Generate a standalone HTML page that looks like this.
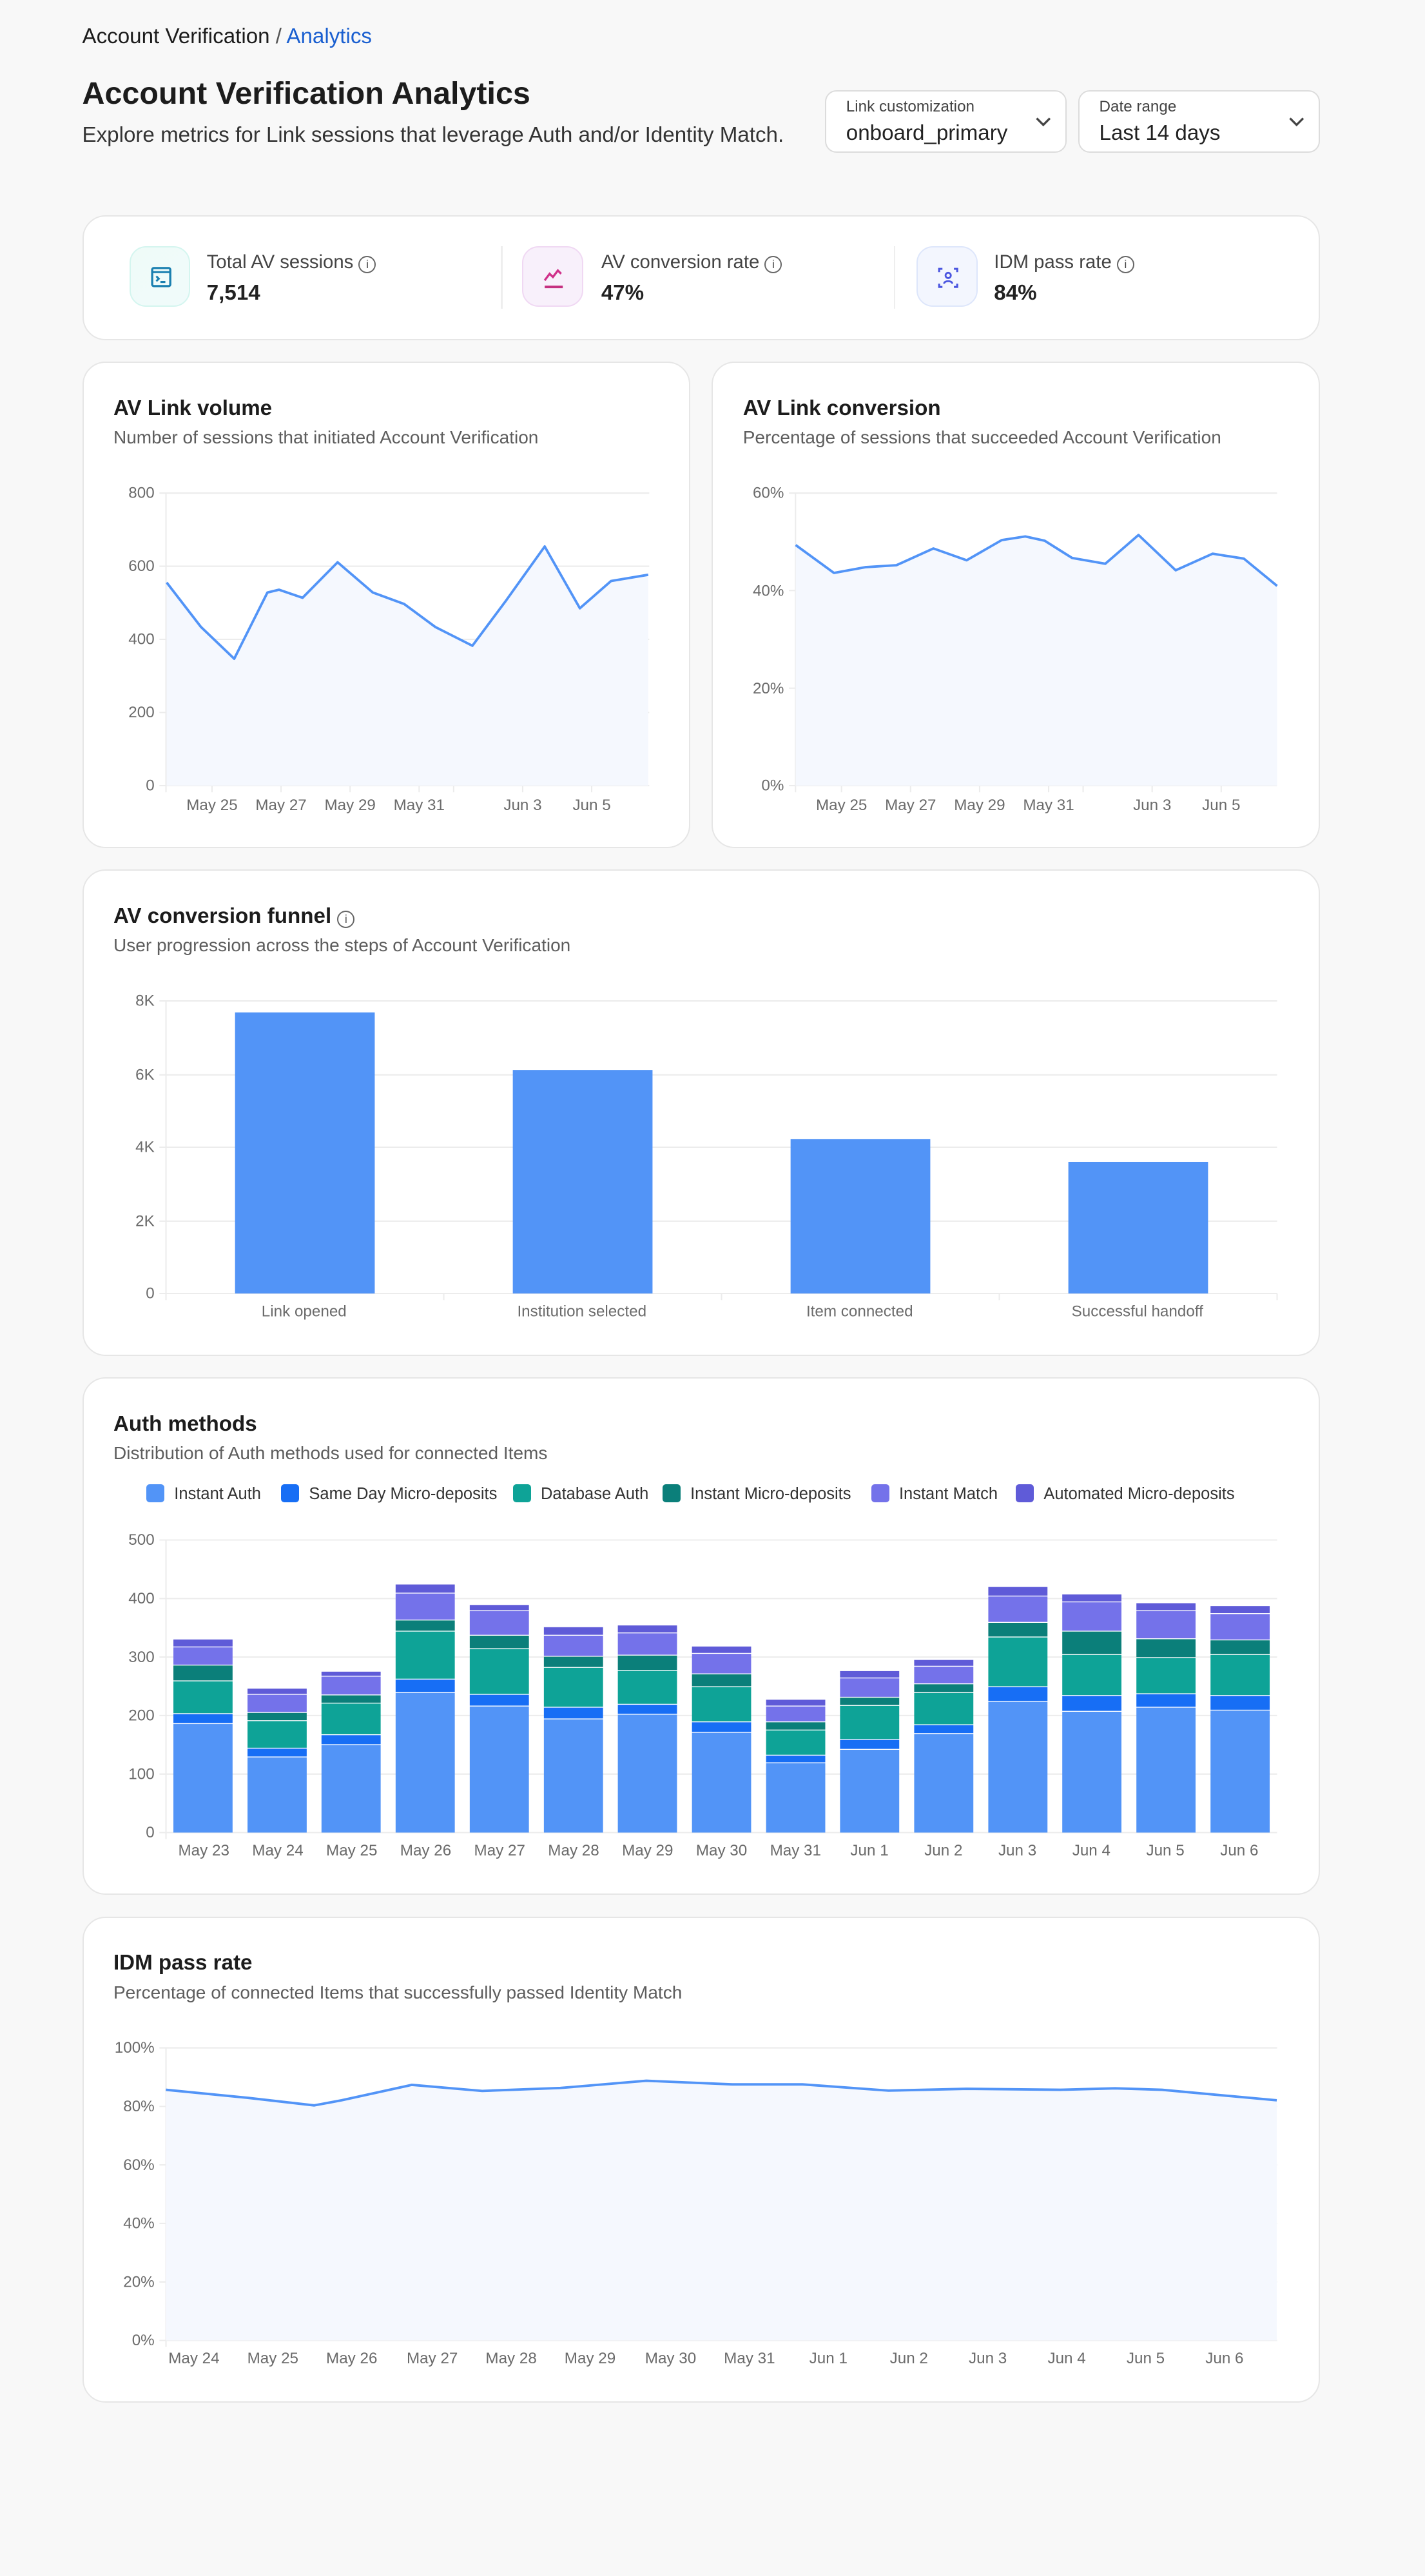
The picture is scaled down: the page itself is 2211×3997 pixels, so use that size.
<!DOCTYPE html>
<html><head><meta charset="utf-8">
<style>
html,body{margin:0;padding:0;background:#f8f8f8;}
body{width:2211px;height:3997px;overflow:hidden;}
#p{zoom:2.5502;width:867px;height:1567px;position:relative;font-family:"Liberation Sans",Arial,sans-serif;color:#1c1c1c;}
.a{position:absolute;}
.card{position:absolute;background:#fff;border:1px solid #e6e6e6;border-radius:14px;box-sizing:border-box;}
.t{font-size:13px;font-weight:bold;color:#1c1c1c;}
.s{font-size:11px;color:#5d5d5d;}
.dd{position:absolute;top:55px;height:38px;width:147px;border:1px solid #dcdcdc;border-radius:7px;background:#fff;box-sizing:border-box;}
.dd .l{position:absolute;left:12px;top:4px;font-size:9.5px;color:#444;}
.dd .v{position:absolute;left:12px;top:18px;font-size:13px;color:#222;}
.ic{position:absolute;width:37px;height:37px;border-radius:10px;box-sizing:border-box;}
.kl{position:absolute;font-size:11.5px;color:#444;}
.kv{position:absolute;font-size:13px;font-weight:bold;color:#222;}
svg text{font-family:"Liberation Sans",Arial,sans-serif;}
.ax{font-size:9.5px;fill:#6b6b6b;}
.c1{fill:#5294f7}.c2{fill:#176ef5}.c3{fill:#0ea397}.c4{fill:#0b7f7a}.c5{fill:#7472ea}.c6{fill:#5f5bd8}
.lg{position:absolute;top:903px;font-size:10px;color:#333;}
.lg i{display:inline-block;width:11px;height:11px;border-radius:2px;vertical-align:-2px;margin-right:6px;}
</style></head><body><div id="p">
<div class="a" style="left:50px;top:15px;font-size:13px;">Account Verification <span style="color:#555">/</span> <span style="color:#1a5fd0">Analytics</span></div>
<div class="a" style="left:50px;top:46px;font-size:19px;font-weight:bold;">Account Verification Analytics</div>
<div class="a" style="left:50px;top:75px;font-size:13px;color:#333;">Explore metrics for Link sessions that leverage Auth and/or Identity Match.</div>
<div class="dd" style="left:502px"><div class="l">Link customization</div><div class="v">onboard_primary</div><svg class="a" style="left:127px;top:15px" width="10" height="7"><path d="M1 1l4 4 4-4" stroke="#444" stroke-width="1.3" fill="none"/></svg></div>
<div class="dd" style="left:656px"><div class="l">Date range</div><div class="v">Last 14 days</div><svg class="a" style="left:127px;top:15px" width="10" height="7"><path d="M1 1l4 4 4-4" stroke="#444" stroke-width="1.3" fill="none"/></svg></div>

<div class="card" style="left:50px;top:131px;width:753px;height:76px;">
<div class="ic" style="left:28px;top:18px;background:linear-gradient(135deg,#effbf8,#f0fbfb);border:1px solid #d4f5ef;"><svg width="37" height="37"><rect x="13" y="12.5" width="11" height="11" rx="1" fill="none" stroke="#1a7fb0" stroke-width="1.3"/><path d="M13 15h11M15.5 17.5l1.5 1.5-1.5 1.5M18 21h3" stroke="#1a7fb0" stroke-width="1.2" fill="none"/></svg></div>
<div class="kl" style="left:75px;top:21px">Total AV sessions <span style="display:inline-block;width:9px;height:9px;border:1px solid #666;border-radius:50%;font-size:7px;text-align:center;line-height:9px;vertical-align:0">i</span></div>
<div class="kv" style="left:75px;top:39px">7,514</div>
<div class="a" style="left:254px;top:18px;width:1px;height:38px;background:#eee"></div>
<div class="ic" style="left:267px;top:18px;background:#f8f0fb;border:1px solid #f0d8f3;"><svg width="37" height="37"><path d="M13 20l3-4 2 2 3-4 2 2" stroke="#d0308a" stroke-width="1.3" fill="none"/><path d="M13 24h11" stroke="#c53080" stroke-width="1.5"/></svg></div>
<div class="kl" style="left:315px;top:21px">AV conversion rate <span style="display:inline-block;width:9px;height:9px;border:1px solid #666;border-radius:50%;font-size:7px;text-align:center;line-height:9px">i</span></div>
<div class="kv" style="left:315px;top:39px">47%</div>
<div class="a" style="left:493px;top:18px;width:1px;height:38px;background:#eee"></div>
<div class="ic" style="left:507px;top:18px;background:#f3f6fe;border:1px solid #dde6fb;"><svg width="37" height="37"><path d="M13 15v-2h2M22 13h2v2M24 22v2h-2M15 24h-2v-2" stroke="#4a55e0" stroke-width="1.2" fill="none"/><circle cx="18.5" cy="17" r="1.6" fill="none" stroke="#4a55e0" stroke-width="1.1"/><path d="M16 22c0-2 5-2 5 0" stroke="#4a55e0" stroke-width="1.1" fill="none"/></svg></div>
<div class="kl" style="left:554px;top:21px">IDM pass rate <span style="display:inline-block;width:9px;height:9px;border:1px solid #666;border-radius:50%;font-size:7px;text-align:center;line-height:9px">i</span></div>
<div class="kv" style="left:554px;top:39px">84%</div>
</div>

<div class="card" style="left:50px;top:220px;width:370px;height:296px;"></div>
<div class="a t" style="left:69px;top:241px">AV Link volume</div>
<div class="a s" style="left:69px;top:260px">Number of sessions that initiated Account Verification</div>
<div class="card" style="left:433px;top:220px;width:370px;height:296px;"></div>
<div class="a t" style="left:452px;top:241px">AV Link conversion</div>
<div class="a s" style="left:452px;top:260px">Percentage of sessions that succeeded Account Verification</div>

<div class="card" style="left:50px;top:529px;width:753px;height:296px;"></div>
<div class="a t" style="left:69px;top:550px">AV conversion funnel <span style="display:inline-block;width:9px;height:9px;border:1px solid #666;border-radius:50%;font-size:7px;text-align:center;line-height:9px;font-weight:normal;color:#555">i</span></div>
<div class="a s" style="left:69px;top:569px">User progression across the steps of Account Verification</div>

<div class="card" style="left:50px;top:838px;width:753px;height:315px;"></div>
<div class="a t" style="left:69px;top:859px">Auth methods</div>
<div class="a s" style="left:69px;top:878px">Distribution of Auth methods used for connected Items</div>
<div class="lg" style="left:89px"><i style="background:#5294f7"></i>Instant Auth</div>
<div class="lg" style="left:171px"><i style="background:#176ef5"></i>Same Day Micro-deposits</div>
<div class="lg" style="left:312px"><i style="background:#0ea397"></i>Database Auth</div>
<div class="lg" style="left:403px"><i style="background:#0b7f7a"></i>Instant Micro-deposits</div>
<div class="lg" style="left:530px"><i style="background:#7472ea"></i>Instant Match</div>
<div class="lg" style="left:618px"><i style="background:#5f5bd8"></i>Automated Micro-deposits</div>

<div class="card" style="left:50px;top:1166px;width:753px;height:296px;"></div>
<div class="a t" style="left:69px;top:1187px">IDM pass rate</div>
<div class="a s" style="left:69px;top:1206px">Percentage of connected Items that successfully passed Identity Match</div>

<svg class="a" style="left:0;top:0" width="867" height="1567">
<g stroke="#ececec" stroke-width="0.8">
<path d="M97 300H395M97 344.5H395M97 389H395M97 433.5H395M97 478H395"/>
<path d="M480 300H777M480 359.3H777M480 418.7H777M480 478H777"/>
<path d="M97 609H777M97 654H777M97 698H777M97 743H777M97 787H777"/>
<path d="M97 937H777M97 972.6H777M97 1008.2H777M97 1043.8H777M97 1079.4H777M97 1115H777"/>
<path d="M97 1246H777M97 1281.6H777M97 1317.2H777M97 1352.8H777M97 1388.4H777M97 1424H777"/>
<path d="M101 300V482M484 300V482M101 609V791M101 937V1119M101 1246V1428"/>
<path d="M129 478v4M171 478v4M213 478v4M255 478v4M276 478v4M318 478v4M360 478v4"/>
<path d="M512 478v4M554 478v4M596 478v4M638 478v4M659 478v4M701 478v4M743 478v4"/>
<path d="M270 787v4M439 787v4M608 787v4M777 787v4"/>
</g>
<g class="ax" text-anchor="end">
<text x="94" y="303">800</text><text x="94" y="347.5">600</text><text x="94" y="392">400</text><text x="94" y="436.5">200</text><text x="94" y="481">0</text>
<text x="477" y="303">60%</text><text x="477" y="362.5">40%</text><text x="477" y="422">20%</text><text x="477" y="481">0%</text>
<text x="94" y="612">8K</text><text x="94" y="657">6K</text><text x="94" y="701">4K</text><text x="94" y="746">2K</text><text x="94" y="790">0</text>
<text x="94" y="940">500</text><text x="94" y="975.6">400</text><text x="94" y="1011.2">300</text><text x="94" y="1046.8">200</text><text x="94" y="1082.4">100</text><text x="94" y="1118">0</text>
<text x="94" y="1249">100%</text><text x="94" y="1284.6">80%</text><text x="94" y="1320.2">60%</text><text x="94" y="1355.8">40%</text><text x="94" y="1391.4">20%</text><text x="94" y="1427">0%</text>
</g>
<g class="ax" text-anchor="middle">
<text x="129" y="493">May 25</text><text x="171" y="493">May 27</text><text x="213" y="493">May 29</text><text x="255" y="493">May 31</text><text x="318" y="493">Jun 3</text><text x="360" y="493">Jun 5</text>
<text x="512" y="493">May 25</text><text x="554" y="493">May 27</text><text x="596" y="493">May 29</text><text x="638" y="493">May 31</text><text x="701" y="493">Jun 3</text><text x="743" y="493">Jun 5</text>
<text x="185" y="801">Link opened</text><text x="354" y="801">Institution selected</text><text x="523" y="801">Item connected</text><text x="692" y="801">Successful handoff</text>
<text x="124" y="1129">May 23</text><text x="169" y="1129">May 24</text><text x="214" y="1129">May 25</text><text x="259" y="1129">May 26</text><text x="304" y="1129">May 27</text><text x="349" y="1129">May 28</text><text x="394" y="1129">May 29</text><text x="439" y="1129">May 30</text><text x="484" y="1129">May 31</text><text x="529" y="1129">Jun 1</text><text x="574" y="1129">Jun 2</text><text x="619" y="1129">Jun 3</text><text x="664" y="1129">Jun 4</text><text x="709" y="1129">Jun 5</text><text x="754" y="1129">Jun 6</text>
<text x="118" y="1438">May 24</text><text x="166" y="1438">May 25</text><text x="214" y="1438">May 26</text><text x="263" y="1438">May 27</text><text x="311" y="1438">May 28</text><text x="359" y="1438">May 29</text><text x="408" y="1438">May 30</text><text x="456" y="1438">May 31</text><text x="504" y="1438">Jun 1</text><text x="553" y="1438">Jun 2</text><text x="601" y="1438">Jun 3</text><text x="649" y="1438">Jun 4</text><text x="697" y="1438">Jun 5</text><text x="745" y="1438">Jun 6</text>
</g>
<path d="M101.4 354.4L122.3 381.5L142.5 400.8L162.7 360.5L169.8 358.8L184.1 363.7L205.4 342.1L226.8 360.5L245.9 367.5L264.9 381.5L287.4 392.9L307.6 365.8L331.4 332.5L352.8 370.1L371.8 353.5L394.4 349.7V478H101.4Z" fill="#f5f8fe"/>
<polyline points="101.4,354.4 122.3,381.5 142.5,400.8 162.7,360.5 169.8,358.8 184.1,363.7 205.4,342.1 226.8,360.5 245.9,367.5 264.9,381.5 287.4,392.9 307.6,365.8 331.4,332.5 352.8,370.1 371.8,353.5 394.4,349.7" fill="none" stroke="#5294f7" stroke-width="1.5" stroke-linejoin="round"/>
<path d="M484.1 331.6L507.4 348.6L526.4 345.1L545.4 343.9L567.9 333.7L588.1 340.9L609.5 328.6L623.8 326.4L635.6 329L652.3 339.5L672.5 343L692.7 325.5L715.3 347L737.8 336.9L756.8 339.9L777 356.5V478H484.1Z" fill="#f5f8fe"/>
<polyline points="484.1,331.6 507.4,348.6 526.4,345.1 545.4,343.9 567.9,333.7 588.1,340.9 609.5,328.6 623.8,326.4 635.6,329 652.3,339.5 672.5,343 692.7,325.5 715.3,347 737.8,336.9 756.8,339.9 777,356.5" fill="none" stroke="#5294f7" stroke-width="1.5" stroke-linejoin="round"/>
<g fill="#5294f7"><rect x="143" y="616" width="85" height="171"/><rect x="312" y="651" width="85" height="136"/><rect x="481" y="693" width="85" height="94"/><rect x="650" y="707" width="85" height="80"/></g>
<path d="M100.9 1271.5L150.8 1276.4L191.2 1281L207.8 1277.9L250.6 1268.5L293.4 1272.2L340.9 1270.4L393.2 1266L445.5 1268.2L488.3 1268.2L540.6 1272L588.1 1270.9L645.1 1271.5L678.4 1270.6L706.9 1271.5L776.8 1277.9V1424H100.9Z" fill="#f5f8fe"/>
<polyline points="100.9,1271.5 150.8,1276.4 191.2,1281 207.8,1277.9 250.6,1268.5 293.4,1272.2 340.9,1270.4 393.2,1266 445.5,1268.2 488.3,1268.2 540.6,1272 588.1,1270.9 645.1,1271.5 678.4,1270.6 706.9,1271.5 776.8,1277.9" fill="none" stroke="#5294f7" stroke-width="1.5" stroke-linejoin="round"/>
<g transform="translate(0,1115) scale(1,-0.356)">
<g transform="translate(105.5,0)"><rect class="c1" width="36" y="0" height="185.5"/><rect class="c2" width="36" y="187" height="15.5"/><rect class="c3" width="36" y="204" height="54.5"/><rect class="c4" width="36" y="260" height="25.5"/><rect class="c5" width="36" y="287" height="29.5"/><rect class="c6" width="36" y="318" height="12"/></g>
<g transform="translate(150.6,0)"><rect class="c1" width="36" y="0" height="128.5"/><rect class="c2" width="36" y="130" height="13.5"/><rect class="c3" width="36" y="145" height="45.5"/><rect class="c4" width="36" y="192" height="12.5"/><rect class="c5" width="36" y="206" height="29.5"/><rect class="c6" width="36" y="237" height="9"/></g>
<g transform="translate(195.6,0)"><rect class="c1" width="36" y="0" height="149.5"/><rect class="c2" width="36" y="151" height="15.5"/><rect class="c3" width="36" y="168" height="52.5"/><rect class="c4" width="36" y="222" height="12.5"/><rect class="c5" width="36" y="236" height="30.5"/><rect class="c6" width="36" y="268" height="7"/></g>
<g transform="translate(240.7,0)"><rect class="c1" width="36" y="0" height="238.5"/><rect class="c2" width="36" y="240" height="21.5"/><rect class="c3" width="36" y="263" height="80.5"/><rect class="c4" width="36" y="345" height="17.5"/><rect class="c5" width="36" y="364" height="44.5"/><rect class="c6" width="36" y="410" height="14"/></g>
<g transform="translate(285.8,0)"><rect class="c1" width="36" y="0" height="215.5"/><rect class="c2" width="36" y="217" height="18.5"/><rect class="c3" width="36" y="237" height="76.5"/><rect class="c4" width="36" y="315" height="21.5"/><rect class="c5" width="36" y="338" height="40.5"/><rect class="c6" width="36" y="380" height="9"/></g>
<g transform="translate(330.9,0)"><rect class="c1" width="36" y="0" height="193.5"/><rect class="c2" width="36" y="195" height="18.5"/><rect class="c3" width="36" y="215" height="66.5"/><rect class="c4" width="36" y="283" height="17.5"/><rect class="c5" width="36" y="302" height="34.5"/><rect class="c6" width="36" y="338" height="13"/></g>
<g transform="translate(375.9,0)"><rect class="c1" width="36" y="0" height="201.5"/><rect class="c2" width="36" y="203" height="15.5"/><rect class="c3" width="36" y="220" height="56.5"/><rect class="c4" width="36" y="278" height="24.5"/><rect class="c5" width="36" y="304" height="36.5"/><rect class="c6" width="36" y="342" height="12"/></g>
<g transform="translate(421,0)"><rect class="c1" width="36" y="0" height="170.5"/><rect class="c2" width="36" y="172" height="16.5"/><rect class="c3" width="36" y="190" height="58.5"/><rect class="c4" width="36" y="250" height="20.5"/><rect class="c5" width="36" y="272" height="33.5"/><rect class="c6" width="36" y="307" height="11"/></g>
<g transform="translate(466.1,0)"><rect class="c1" width="36" y="0" height="118.5"/><rect class="c2" width="36" y="120" height="11.5"/><rect class="c3" width="36" y="133" height="41.5"/><rect class="c4" width="36" y="176" height="12.5"/><rect class="c5" width="36" y="190" height="25.5"/><rect class="c6" width="36" y="217" height="10"/></g>
<g transform="translate(511.1,0)"><rect class="c1" width="36" y="0" height="141.5"/><rect class="c2" width="36" y="143" height="15.5"/><rect class="c3" width="36" y="160" height="56.5"/><rect class="c4" width="36" y="218" height="12.5"/><rect class="c5" width="36" y="232" height="31.5"/><rect class="c6" width="36" y="265" height="11"/></g>
<g transform="translate(556.2,0)"><rect class="c1" width="36" y="0" height="168.5"/><rect class="c2" width="36" y="170" height="13.5"/><rect class="c3" width="36" y="185" height="53.5"/><rect class="c4" width="36" y="240" height="13.5"/><rect class="c5" width="36" y="255" height="28.5"/><rect class="c6" width="36" y="285" height="10"/></g>
<g transform="translate(601.3,0)"><rect class="c1" width="36" y="0" height="223.5"/><rect class="c2" width="36" y="225" height="23.5"/><rect class="c3" width="36" y="250" height="83.5"/><rect class="c4" width="36" y="335" height="23.5"/><rect class="c5" width="36" y="360" height="43.5"/><rect class="c6" width="36" y="405" height="15"/></g>
<g transform="translate(646.3,0)"><rect class="c1" width="36" y="0" height="206.5"/><rect class="c2" width="36" y="208" height="25.5"/><rect class="c3" width="36" y="235" height="68.5"/><rect class="c4" width="36" y="305" height="38.5"/><rect class="c5" width="36" y="345" height="48.5"/><rect class="c6" width="36" y="395" height="12"/></g>
<g transform="translate(691.4,0)"><rect class="c1" width="36" y="0" height="213.5"/><rect class="c2" width="36" y="215" height="21.5"/><rect class="c3" width="36" y="238" height="60.5"/><rect class="c4" width="36" y="300" height="30.5"/><rect class="c5" width="36" y="332" height="46.5"/><rect class="c6" width="36" y="380" height="12"/></g>
<g transform="translate(736.5,0)"><rect class="c1" width="36" y="0" height="208.5"/><rect class="c2" width="36" y="210" height="23.5"/><rect class="c3" width="36" y="235" height="68.5"/><rect class="c4" width="36" y="305" height="23.5"/><rect class="c5" width="36" y="330" height="43.5"/><rect class="c6" width="36" y="375" height="12"/></g>
</g>
</svg>
</div></body></html>
